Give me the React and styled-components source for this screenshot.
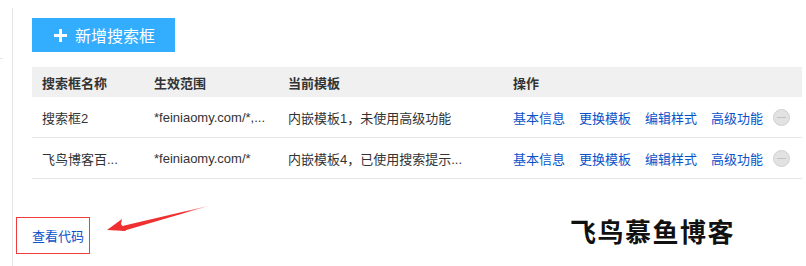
import React from "react";
import styled, { createGlobalStyle } from "styled-components";

const Global = createGlobalStyle`
  html, body { margin: 0; padding: 0; background: #fff; }
  body { font-family: "Liberation Sans", "Noto Sans CJK SC", sans-serif; font-size: 13px; color: #333; }
`;

const Page = styled.div`
  display: flex;
  width: 806px;
  height: 266px;
  overflow: hidden;
`;

const Side = styled.div`
  width: 12px;
  flex: none;
  display: flex;
  flex-direction: column;
`;

const Tick = styled.div`
  margin-top: 58px;
  width: 3px;
  height: 1px;
  background: #e6e6e6;
`;

const Main = styled.div`
  margin-top: 8px;
  border-left: 1px solid #e6e6e6;
  flex: 1;
  display: flex;
  flex-direction: column;
`;

const Top = styled.div`
  padding: ${(p) => (p.$flush ? "0" : "10px")} 0 0 19px;
`;

const AddButton = styled.button`
  display: flex;
  align-items: center;
  gap: 8px;
  width: 143px;
  height: 34px;
  padding: 0 0 0 22px;
  border: none;
  background: #33adfe;
  color: #fff;
  font-family: "Liberation Sans", "Noto Sans CJK SC", sans-serif;
  font-size: 16px;
  cursor: pointer;
`;

const Table = styled.div`
  margin-top: 15px;
  width: 770px;
`;

const Row = styled.div`
  display: grid;
  grid-template-columns: 112px 134px 225px 1fr;
  align-items: center;
  height: ${(p) => (p.$head ? "30px" : "40px")};
  background: ${(p) => (p.$head ? "#f0f0f0" : "#fff")};
  border-bottom: ${(p) => (p.$head ? "none" : "1px solid #e6e6e6")};
  font-weight: ${(p) => (p.$head ? "bold" : "normal")};
  color: #333;
`;

const Cell = styled.div`
  padding-left: 10px;
  white-space: nowrap;
  overflow: hidden;
`;

const Ops = styled.div`
  padding-left: 10px;
  display: flex;
  align-items: center;
  gap: 14px;
`;

const Link = styled.a`
  color: #0a52c8;
  text-decoration: none;
  white-space: nowrap;
`;

const Toggle = styled.span`
  width: 17px;
  height: 17px;
  box-sizing: border-box;
  border-radius: 50%;
  background: #e2e2e2;
  border: 1px solid #d0d0d0;
  display: flex;
  align-items: center;
  justify-content: center;
  margin-left: -4px;
  &::after {
    content: "";
    width: 9px;
    height: 1px;
    background: #c2c2c2;
  }
`;

const Footer = styled.div`
  position: relative;
  display: flex;
  align-items: center;
  padding-top: 38px;
`;

const CodeBox = styled.div`
  margin-left: 3px;
  width: 74px;
  height: 37px;
  box-sizing: border-box;
  border: 1px solid #f23b3b;
  display: flex;
  align-items: center;
  padding-left: 15px;
  color: #0a52c8;
  font-size: 13px;
`;

const Brand = styled.div`
  margin-left: 480px;
  margin-top: -10px;
  font-family: "Noto Sans CJK SC", sans-serif;
  font-weight: bold;
  font-size: 26px;
  letter-spacing: 1.5px;
  color: #111;
`;

const Arrow = styled.svg`
  position: absolute;
  left: 87px;
  top: 20px;
`;

const PlusIcon = () => (
  <svg width="13" height="13" viewBox="0 0 13 13">
    <rect x="5" y="0" width="3" height="13" fill="#fff" />
    <rect x="0" y="5" width="13" height="3" fill="#fff" />
  </svg>
);

const rows = [
  { name: "搜索框2", scope: "*feiniaomy.com/*,...", tpl: "内嵌模板1，未使用高级功能" },
  { name: "飞鸟博客百...", scope: "*feiniaomy.com/*", tpl: "内嵌模板4，已使用搜索提示..." },
];

export default function App() {
  return (
    <>
      <Global />
      <Page>
        <Side>
          <Tick />
        </Side>
        <Main>
          <Top>
            <AddButton>
              <PlusIcon />
              新增搜索框
            </AddButton>
          </Top>
          <Top $flush>
            <Table>
              <Row $head>
                <Cell>搜索框名称</Cell>
                <Cell>生效范围</Cell>
                <Cell>当前模板</Cell>
                <Cell>操作</Cell>
              </Row>
              {rows.map((r) => (
                <Row key={r.name}>
                  <Cell>{r.name}</Cell>
                  <Cell>{r.scope}</Cell>
                  <Cell>{r.tpl}</Cell>
                  <Ops>
                    <Link>基本信息</Link>
                    <Link>更换模板</Link>
                    <Link>编辑样式</Link>
                    <Link>高级功能</Link>
                    <Toggle />
                  </Ops>
                </Row>
              ))}
            </Table>
          </Top>
          <Footer>
            <CodeBox>查看代码</CodeBox>
            <Brand>飞鸟慕鱼博客</Brand>
            <Arrow width="120" height="40" viewBox="0 0 120 40">
              <defs>
                <linearGradient id="ag" x1="0" y1="0" x2="1" y2="0">
                  <stop offset="0" stopColor="#f03030" />
                  <stop offset="0.7" stopColor="#f03030" />
                  <stop offset="1" stopColor="#f03030" stopOpacity="0.1" />
                </linearGradient>
              </defs>
              <path d="M7 31 L22 20 L21 25 L26 32 Z" fill="#f03030" />
              <path d="M16 28.5 L112 6 L23 32 Z" fill="url(#ag)" />
            </Arrow>
          </Footer>
        </Main>
      </Page>
    </>
  );
}
